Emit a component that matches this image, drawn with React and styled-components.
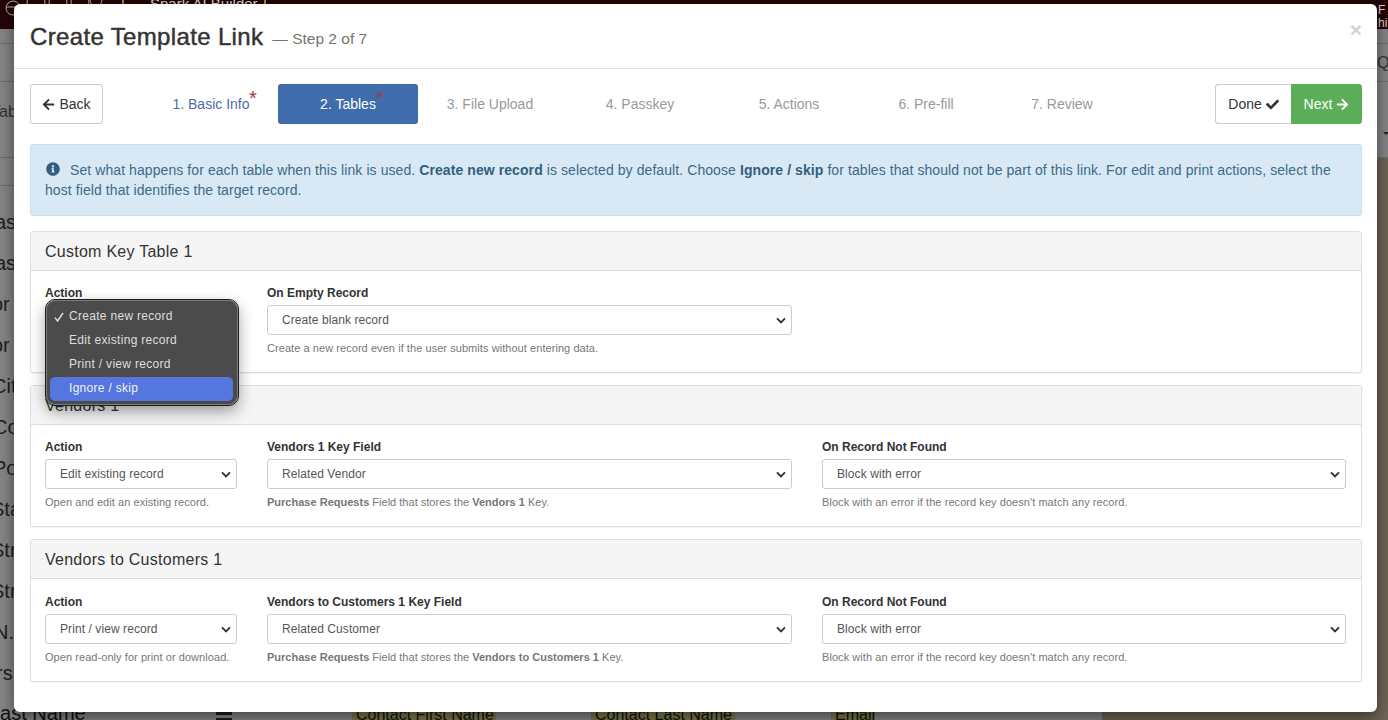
import React from "react";
import styled, { createGlobalStyle } from "styled-components";
import { FaArrowLeft, FaArrowRight, FaCheck, FaInfoCircle } from "react-icons/fa";

const Global = createGlobalStyle`
  html, body {
    margin: 0;
    padding: 0;
    height: 100%;
    overflow: hidden;
    font-family: "Liberation Sans", Arial, sans-serif;
  }
`;

const chevron = `url("data:image/svg+xml,%3Csvg xmlns='http://www.w3.org/2000/svg' width='10' height='7' viewBox='0 0 10 7'%3E%3Cpath d='M1 1.3 5 5.3 9 1.3' fill='none' stroke='%23333' stroke-width='1.9'/%3E%3C/svg%3E")`;

/* page behind the dialog, dimmed */
const Page = styled.div`
  position: relative;
  width: 1388px;
  height: 720px;
  overflow: hidden;
  display: flex;
  flex-direction: column;
  background: #6f6555;
`;

const TopBar = styled.div`
  height: 29px;
  flex: none;
  background: #230506;
  color: #d8d4d0;
  display: flex;
  overflow: hidden;
`;

const BarLogo = styled.svg`
  width: 122px;
  height: 29px;
  flex: none;
`;

const BarTitle = styled.div`
  width: 144px;
  height: 12px;
  box-sizing: border-box;
  border: solid #b5862f;
  border-width: 0 2px;
  padding-left: 26px;
  font-size: 15px;
  line-height: 8px;
  white-space: nowrap;
  overflow: hidden;
`;

const BarUser = styled.div`
  margin-left: auto;
  font-size: 12px;
  line-height: 13px;
  padding-top: 4px;
  width: 10px;
  overflow: hidden;
`;

const Under = styled.div`
  flex: 1;
  display: flex;
`;

const Sheet = styled.div`
  width: 1102px;
  background: #858585;
  display: flex;
  flex-direction: column;
`;

const Band = styled.div`
  height: ${(p) => p.$h}px;
  box-sizing: border-box;
  border-bottom: 1px solid #6e6e6e;
  background: #858585;
  display: flex;
  align-items: center;
  font-size: 16px;
  color: #333;
  white-space: nowrap;
  overflow: hidden;
`;

const TabText = styled.span`
  margin-left: -9px;
  margin-top: -16px;
`;

const FieldList = styled.div`
  margin-top: 16px;
`;

const FieldRow = styled.div`
  height: 41px;
  font-size: 20px;
  line-height: 41px;
  color: #1f1f1f;
  white-space: nowrap;
  margin-left: ${(p) => p.$shift || 0}px;
`;

const LastRow = styled.div`
  display: flex;
  height: 41px;
  padding-top: 8px;
  box-sizing: border-box;
  margin-left: -11px;
  font-size: 16px;
  line-height: 20px;
  color: #111;
  white-space: nowrap;
`;

const LastLabel = styled.span`
  font-size: 20px;
  line-height: 22px;
  width: 227px;
`;

const Bars = styled.span`
  width: 16px;
  height: 3px;
  margin: 10px 120px 0 0;
  border: solid #1c1c1c;
  border-width: 3px 0;
`;

const YellowCell = styled.span`
  width: ${(p) => p.$w}px;
  background: #7b7949;
  padding-left: 4px;
  margin-right: ${(p) => p.$gap}px;
  height: 20px;
  margin-top: 3px;
  overflow: hidden;
`;

const Side = styled.div`
  flex: 1;
  min-width: 0;
`;

const QuText = styled.span`
  margin-left: 275px;
`;

const SideCaret = styled.div`
  width: 0;
  margin: -26px 0 0 281px;
  border-style: solid;
  border-width: 3px 3px 0 3px;
  border-color: #222 transparent transparent transparent;
`;

/* dialog */
const Modal = styled.div`
  position: absolute;
  left: 14px;
  top: 4px;
  width: 1363px;
  height: 708px;
  box-sizing: border-box;
  background: #fff;
  border-radius: 6px;
  box-shadow: 0 5px 15px rgba(0, 0, 0, 0.5);
  color: #333;
`;

const ModalHeader = styled.div`
  height: 65px;
  box-sizing: border-box;
  border-bottom: 1px solid #e5e5e5;
  padding: 17px 15px 0 16px;
  display: flex;
  align-items: baseline;
`;

const Title = styled.h4`
  margin: 0;
  font-size: 24px;
  line-height: 32px;
  font-weight: 400;
  letter-spacing: 0.35px;
  -webkit-text-stroke: 0.45px #333;
`;

const StepNote = styled.span`
  margin-left: 9px;
  font-size: 15.5px;
  color: #757575;
  position: relative;
  top: -1px;
`;

const Close = styled.span`
  margin-left: auto;
  font-size: 21px;
  font-weight: 700;
  color: #d2d2d2;
  line-height: 1;
  position: relative;
  top: -8px;
`;

const ModalBody = styled.div`
  padding: 15px 15px 0 16px;
`;

const Wizard = styled.div`
  display: flex;
  align-items: center;
  height: 40px;
  margin-bottom: 20px;
`;

const Btn = styled.div`
  height: 40px;
  box-sizing: border-box;
  display: flex;
  align-items: center;
  justify-content: center;
  gap: 4px;
  font-size: 14px;
  color: #333;
  background: #fff;
  border: 1px solid #ccc;
  width: ${(p) => p.$w}px;
  border-radius: 3px;
  svg {
    font-size: 13px;
  }
`;

const DoneBtn = styled(Btn)`
  border-radius: 3px 0 0 3px;
  border-right: 0;
`;

const NextBtn = styled(Btn)`
  background: #5cae58;
  border-color: #5cae58;
  color: #fff;
  border-radius: 0 3px 3px 0;
`;

const Steps = styled.div`
  display: flex;
  margin-left: 41px;
  margin-right: auto;
`;

const Step = styled.div`
  position: relative;
  width: ${(p) => p.$w}px;
  height: 40px;
  display: flex;
  align-items: center;
  justify-content: center;
  font-size: 14px;
  border-radius: 3px;
  color: ${(p) => (p.$active ? "#fff" : p.$done ? "#4a6fa5" : "#999")};
  background: ${(p) => (p.$active ? "#3f6dac" : "transparent")};
`;

const Star = styled.span`
  position: absolute;
  top: 4px;
  left: calc(50% + ${(p) => p.$x}px);
  font-size: 20px;
  line-height: 20px;
  color: #a33c3c;
`;

const Alert = styled.div`
  box-sizing: border-box;
  height: 72px;
  padding: 15px 15px 15px 14px;
  margin-bottom: 15px;
  background: #d8e9f5;
  border: 1px solid #c2e4ee;
  border-radius: 3px;
  color: #3d6a88;
  font-size: 14px;
  line-height: 20px;
  letter-spacing: 0.08px;
  svg {
    font-size: 14px;
    margin: 0 10px 0 1px;
    vertical-align: -1px;
    color: #31607f;
  }
  b {
    color: #31607f;
  }
`;

const Card = styled.section`
  position: relative;
  box-sizing: border-box;
  height: ${(p) => p.$h || 142}px;
  margin-bottom: 12px;
  background: #fff;
  border: 1px solid #ddd;
  border-radius: 3px;
  box-shadow: 0 1px 1px rgba(0, 0, 0, 0.05);
`;

const CardHead = styled.h5`
  margin: 0;
  height: 39px;
  box-sizing: border-box;
  padding: 10px 14px 0;
  background: #f5f5f5;
  border-bottom: 1px solid #ddd;
  border-radius: 3px 3px 0 0;
  font-size: 16px;
  line-height: 20px;
  font-weight: 400;
  letter-spacing: 0.26px;
  color: #333;
`;

const CardBody = styled.div`
  display: grid;
  grid-template-columns: 192px 525px 524px;
  column-gap: 30px;
  padding: ${(p) => p.$top}px 14px 0;
`;

const Field = styled.div`
  min-width: 0;
`;

const Label = styled.div`
  font-size: 12px;
  line-height: 14px;
  font-weight: 700;
  color: #333;
  margin-bottom: 5px;
`;

const Select = styled.div`
  height: 30px;
  box-sizing: border-box;
  border: 1px solid #ccc;
  border-radius: 3px;
  padding-left: 14px;
  font-size: 12px;
  line-height: 28px;
  letter-spacing: 0.08px;
  color: #555;
  background: #fff ${chevron} no-repeat right 5px center;
`;

const Help = styled.div`
  margin-top: 7px;
  font-size: 11px;
  line-height: 13px;
  letter-spacing: ${(p) => (p.$tight ? 0.01 : 0.06)}px;
  color: #777;
  b {
    font-weight: 700;
  }
`;

/* open native select menu */
const Menu = styled.div`
  position: absolute;
  z-index: 5;
  left: 15px;
  top: 68px;
  width: 192px;
  height: 105px;
  box-sizing: border-box;
  padding: 4px;
  padding-left: 3px;
  background: #4b4b4b;
  border: 1px solid #7c7c7c;
  border-radius: 9px;
  outline: 1px solid #1c1c1c;
  box-shadow: 0 6px 16px rgba(0, 0, 0, 0.4);
`;

const MenuItem = styled.div`
  position: relative;
  height: 24px;
  padding-left: 19px;
  border-radius: 5px;
  font-size: 12px;
  line-height: 23px;
  letter-spacing: 0.3px;
  color: ${(p) => (p.$hot ? "#f4f4f4" : "#dedede")};
  background: ${(p) => (p.$hot ? "#5575df" : "transparent")};
`;

const Tick = styled.svg`
  position: absolute;
  left: 4px;
  top: 7px;
`;

const tables = [
  {
    name: "Vendors 1",
    h: 142,
    top: 15,
    action: "Edit existing record",
    actionHelp: "Open and edit an existing record.",
    key: "Related Vendor",
  },
  {
    name: "Vendors to Customers 1",
    h: 143,
    top: 16,
    action: "Print / view record",
    actionHelp: "Open read-only for print or download.",
    key: "Related Customer",
  },
];

const steps = [
  { label: "2. Tables", w: 140, active: true, star: 28 },
  { label: "3. File Upload", w: 144 },
  { label: "4. Passkey", w: 156 },
  { label: "5. Actions", w: 142 },
  { label: "6. Pre-fill", w: 132 },
  { label: "7. Review", w: 140 },
];

const sideLabels = [
  ["as", -5], ["as", -5], ["or", -8], ["or", -8], ["Cit", -8], ["Co", -7],
  ["Po", -7], ["Sta", -9], ["Str", -9], ["Str", -9], ["N.", -6], ["rs", -4],
];

const App = () => {
  return (
    <>
      <Global />
      <Page>
        <TopBar>
          <BarLogo viewBox="0 0 122 29">
            <g fill="none" stroke="#b8afa4" strokeWidth="1">
              <path d="M7 7h13M20 7a7 7 0 1 0-2 6" />
              <circle cx="36" cy="2" r="9" />
              <circle cx="58" cy="2" r="9" />
              <circle cx="80" cy="2" r="9" />
              <circle cx="96" cy="0" r="6" />
            </g>
          </BarLogo>
          <BarTitle>Spark AI Builder</BarTitle>
          <BarUser>F hi</BarUser>
        </TopBar>
        <Under>
          <Sheet>
            <Band $h={15} />
            <Band $h={38} />
            <Band $h={76}><TabText>Tab</TabText></Band>
            <Band $h={28} />
            <FieldList>
              {sideLabels.map(([text, shift], i) => (
                <FieldRow key={i} $shift={shift}>{text}</FieldRow>
              ))}
              <LastRow>
                <LastLabel>Last Name</LastLabel>
                <Bars />
                <YellowCell $w={140} $gap={95}>Contact First Name</YellowCell>
                <YellowCell $w={140} $gap={96}>Contact Last Name</YellowCell>
                <YellowCell $w={40} $gap={0}>Email</YellowCell>
              </LastRow>
            </FieldList>
          </Sheet>
          <Side>
            <Band $h={15} />
            <Band $h={38}><QuText>Qu</QuText></Band>
            <Band $h={76} />
            <SideCaret />
          </Side>
        </Under>

        <Modal>
          <ModalHeader>
            <Title>Create Template Link</Title>
            <StepNote>— Step 2 of 7</StepNote>
            <Close>×</Close>
          </ModalHeader>
          <ModalBody>
            <Wizard>
              <Btn $w={73}><FaArrowLeft />Back</Btn>
              <Steps>
                <Step $w={134} $done>
                  1. Basic Info<Star $x={38}>*</Star>
                </Step>
                {steps.map((s) => (
                  <Step key={s.label} $w={s.w} $active={s.active}>
                    {s.label}
                    {s.star && <Star $x={s.star}>*</Star>}
                  </Step>
                ))}
              </Steps>
              <DoneBtn $w={76}>Done<FaCheck /></DoneBtn>
              <NextBtn $w={71}>Next<FaArrowRight /></NextBtn>
            </Wizard>

            <Alert>
              <FaInfoCircle />
              Set what happens for each table when this link is used. <b>Create new record</b> is
              selected by default. Choose <b>Ignore / skip</b> for tables that should not be part of
              this link. For edit and print actions, select the host field that identifies the
              target record.
            </Alert>

            <Card>
              <CardHead>Custom Key Table 1</CardHead>
              <CardBody $top={15}>
                <Field>
                  <Label>Action</Label>
                  <Select>Create new record</Select>
                </Field>
                <Field>
                  <Label>On Empty Record</Label>
                  <Select>Create blank record</Select>
                  <Help>Create a new record even if the user submits without entering data.</Help>
                </Field>
              </CardBody>
              <Menu>
                <MenuItem>
                  <Tick width="10" height="10" viewBox="0 0 10 10">
                    <path d="M1 5.6 3.6 9 9 1" fill="none" stroke="#e4e4e4" strokeWidth="1.4" />
                  </Tick>
                  Create new record
                </MenuItem>
                <MenuItem>Edit existing record</MenuItem>
                <MenuItem>Print / view record</MenuItem>
                <MenuItem $hot>Ignore / skip</MenuItem>
              </Menu>
            </Card>

            {tables.map((t) => (
              <Card key={t.name} $h={t.h}>
                <CardHead>{t.name}</CardHead>
                <CardBody $top={t.top}>
                  <Field>
                    <Label>Action</Label>
                    <Select>{t.action}</Select>
                    <Help>{t.actionHelp}</Help>
                  </Field>
                  <Field>
                    <Label>{t.name} Key Field</Label>
                    <Select>{t.key}</Select>
                    <Help $tight>
                      <b>Purchase Requests</b> Field that stores the <b>{t.name}</b> Key.
                    </Help>
                  </Field>
                  <Field>
                    <Label>On Record Not Found</Label>
                    <Select>Block with error</Select>
                    <Help>Block with an error if the record key doesn't match any record.</Help>
                  </Field>
                </CardBody>
              </Card>
            ))}
          </ModalBody>
        </Modal>
      </Page>
    </>
  );
};

export default App;
